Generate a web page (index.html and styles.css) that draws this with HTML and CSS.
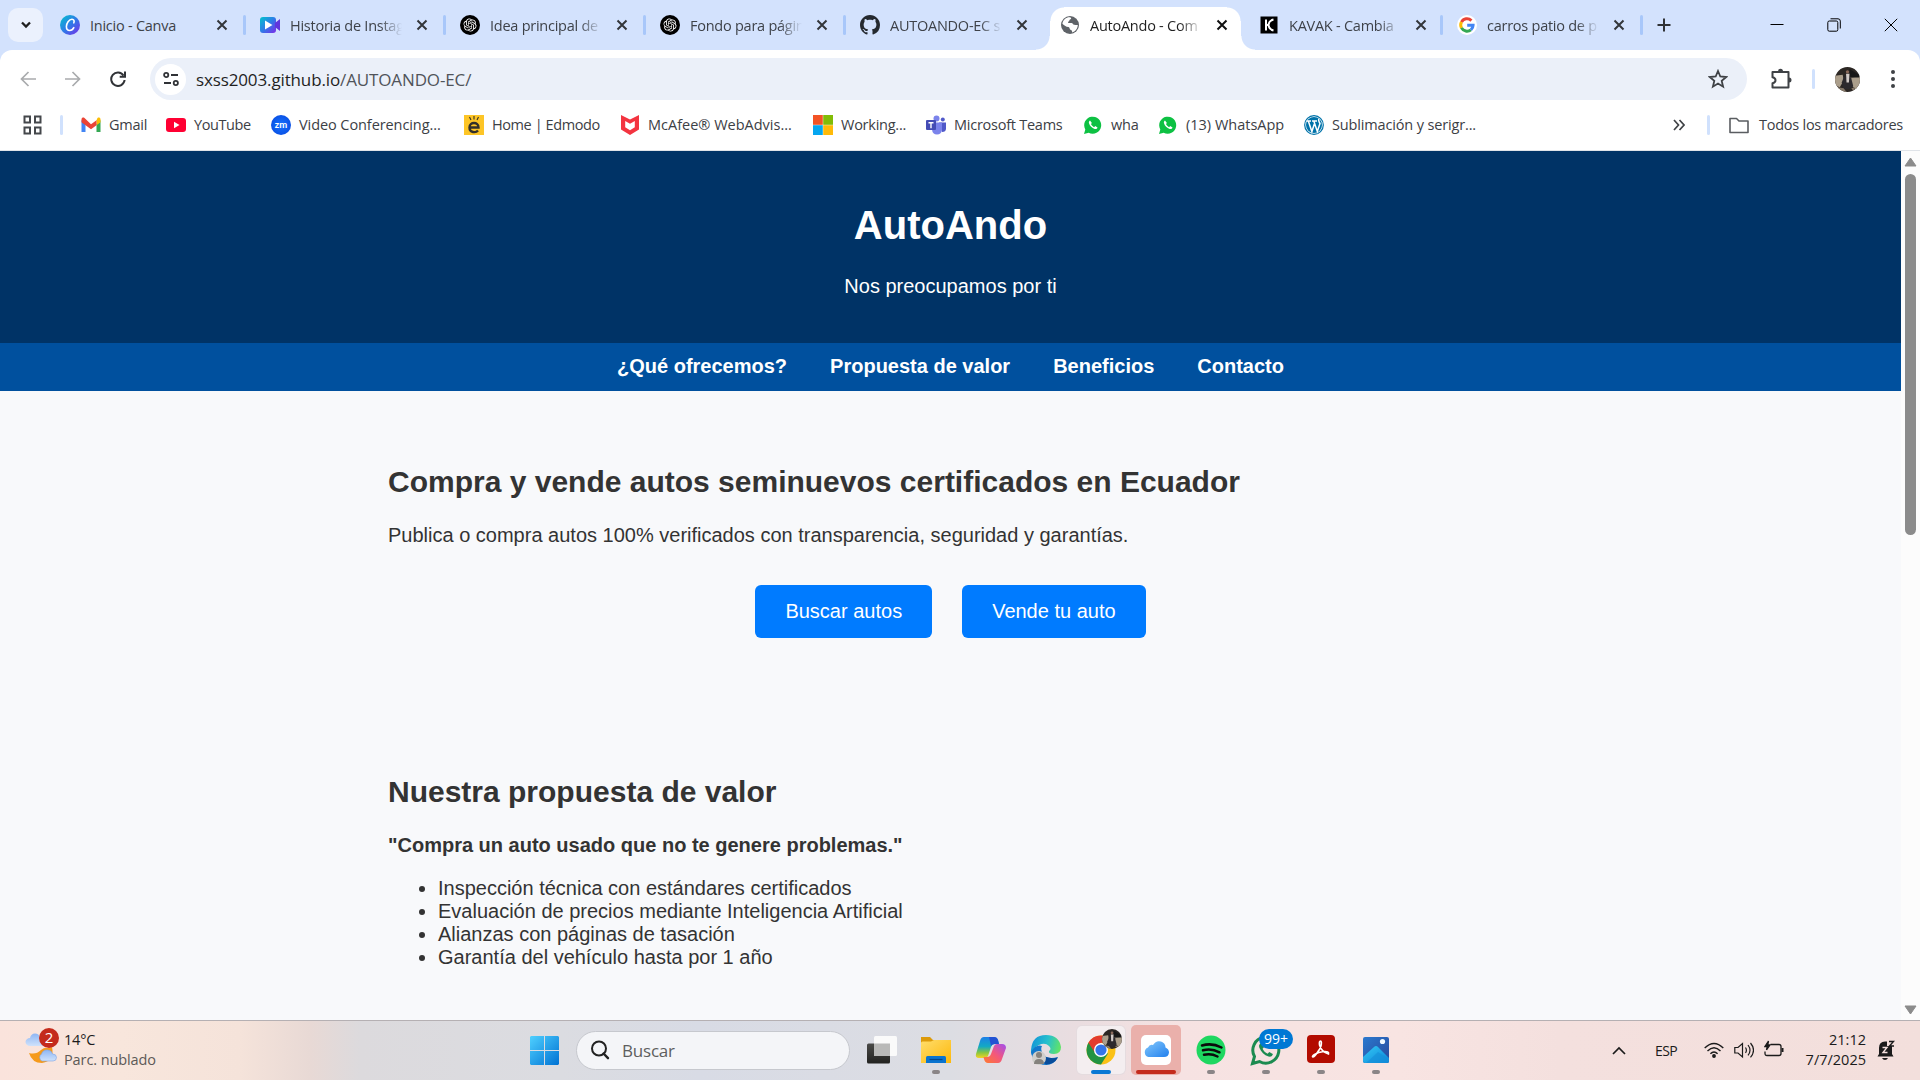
FILE: index.html
```html
<!DOCTYPE html>
<html lang="es">
<head>
<meta charset="utf-8">
<title>AutoAndo - Compra y vende autos</title>
<link rel="stylesheet" href="styles.css">
</head>
<body>
<svg width="0" height="0" class="defs" aria-hidden="true">
  <defs>
    <linearGradient id="canva" x1="0" y1="0" x2="1" y2="1"><stop offset="0" stop-color="#00c4cc"/><stop offset=".5" stop-color="#2f7be8"/><stop offset="1" stop-color="#7d2ae8"/></linearGradient>
    <linearGradient id="win" x1="0" y1="0" x2="1" y2="1"><stop offset="0" stop-color="#4fd0ff"/><stop offset="1" stop-color="#0072d3"/></linearGradient>
    <linearGradient id="folder" x1="0" y1="0" x2="1" y2="1"><stop offset="0" stop-color="#ffdd6b"/><stop offset="1" stop-color="#fdb80b"/></linearGradient>
    <linearGradient id="cop1" x1="0" y1="0" x2="0" y2="1"><stop offset="0" stop-color="#1d7fe8"/><stop offset=".45" stop-color="#12a9c4"/><stop offset=".75" stop-color="#8ac73f"/><stop offset="1" stop-color="#f5d322"/></linearGradient>
    <linearGradient id="cop2" x1="0" y1="1" x2="1" y2="0"><stop offset="0" stop-color="#ff7b2e"/><stop offset=".5" stop-color="#f3577c"/><stop offset="1" stop-color="#a04ff0"/></linearGradient>
    <linearGradient id="edge" x1="0" y1=".2" x2="1" y2=".4"><stop offset="0" stop-color="#1193d8"/><stop offset=".55" stop-color="#27c0cd"/><stop offset="1" stop-color="#5fe26a"/></linearGradient>
    <linearGradient id="cloud" x1="0" y1="0" x2="1" y2="1"><stop offset="0" stop-color="#84c8fb"/><stop offset="1" stop-color="#2180ee"/></linearGradient>
    <linearGradient id="wcloud" x1="0" y1="0" x2="0" y2="1"><stop offset="0" stop-color="#8eb6f4"/><stop offset="1" stop-color="#cfe2fb"/></linearGradient>
    <linearGradient id="photo" x1="0" y1="0" x2="1" y2="1"><stop offset="0" stop-color="#2a79cf"/><stop offset="1" stop-color="#28489a"/></linearGradient>
    <linearGradient id="mount" x1="0" y1="0" x2="1" y2="1"><stop offset="0" stop-color="#35c9f5"/><stop offset="1" stop-color="#0a84d8"/></linearGradient>
    <linearGradient id="tv" x1="0" y1="0" x2="0" y2="1"><stop offset="0" stop-color="#4a4a48"/><stop offset="1" stop-color="#222220"/></linearGradient>
    <radialGradient id="zoomb"><stop offset="0" stop-color="#1473ff"/><stop offset="1" stop-color="#0b52e6"/></radialGradient>
    <symbol id="x" viewBox="0 0 12 12"><path d="M1.500 1.500l9 9M10.500 1.500l-9 9" stroke="currentColor" stroke-width="2" fill="none"/></symbol>
    <symbol id="gpt" viewBox="0 0 20 20"><circle cx="10" cy="10" r="10" fill="#000"/><g transform="translate(3.400 3.400) scale(.55)" fill="#fff"><path d="M22.282 9.821a5.985 5.985 0 0 0-.516-4.910 6.046 6.046 0 0 0-6.510-2.900A6.065 6.065 0 0 0 4.981 4.182a5.985 5.985 0 0 0-3.998 2.900 6.046 6.046 0 0 0 .743 7.097 5.980 5.980 0 0 0 .510 4.911 6.051 6.051 0 0 0 6.515 2.900A5.985 5.985 0 0 0 13.260 24a6.056 6.056 0 0 0 5.772-4.206 5.990 5.990 0 0 0 3.997-2.900 6.056 6.056 0 0 0-.747-7.073zM13.260 22.430a4.476 4.476 0 0 1-2.876-1.040l.141-.081 4.779-2.758a.795.795 0 0 0 .392-.681v-6.737l2.020 1.168a.071.071 0 0 1 .038.052v5.583a4.504 4.504 0 0 1-4.494 4.494zM3.600 18.304a4.470 4.470 0 0 1-.535-3.014l.142.085 4.783 2.759a.771.771 0 0 0 .780 0l5.843-3.369v2.332a.080.080 0 0 1-.033.062L9.740 19.950a4.500 4.500 0 0 1-6.140-1.646zM2.340 7.896a4.485 4.485 0 0 1 2.366-1.973V11.600a.766.766 0 0 0 .388.676l5.815 3.355-2.020 1.168a.076.076 0 0 1-.071 0l-4.830-2.786A4.504 4.504 0 0 1 2.340 7.872zm16.597 3.855l-5.833-3.387L15.119 7.200a.076.076 0 0 1 .071 0l4.830 2.791a4.494 4.494 0 0 1-.676 8.105v-5.678a.790.790 0 0 0-.407-.667zm2.010-3.023l-.141-.085-4.774-2.782a.776.776 0 0 0-.785 0L9.409 9.230V6.897a.066.066 0 0 1 .028-.061l4.830-2.787a4.500 4.500 0 0 1 6.680 4.660zm-12.640 4.135l-2.020-1.164a.080.080 0 0 1-.038-.057V6.075a4.500 4.500 0 0 1 7.375-3.453l-.142.080L8.704 5.460a.795.795 0 0 0-.393.681zm1.097-2.365l2.602-1.500 2.607 1.500v2.999l-2.597 1.500-2.607-1.500z"/></g></symbol>
    <symbol id="wa" viewBox="0 0 20 20"><path d="M1 19l1.300-4.600A8.500 8.500 0 1 1 5.700 17.700z" fill="#0dc143"/><path d="M7 5.500c-.9.500-1.400 1.600-1 2.800.8 2.700 3 4.900 5.700 5.600 1.300.3 2.500-.3 2.800-1.500l-2.300-1.300-1.100 1.100c-1.400-.6-2.500-1.700-3.100-3.100l.9-1z" fill="#fff"/></symbol>
    <clipPath id="round"><circle cx="13" cy="13" r="13"/></clipPath>
    <symbol id="avatar" viewBox="0 0 26 26"><g clip-path="url(#round)"><path d="M0 0h26v26H0z" fill="#2c2724"/><path d="M0 9l8-1 1 6-4 7-5-2zM16 11l10-1v8l-4 6-5-5z" fill="#ab9e8b"/><path d="M15 2l10 6v3l-9 0z" fill="#171717"/><path d="M9 11l4-3 4 4 2 8-4 3H9l-2-7z" fill="#2c292d"/><path d="M11.500 7h3.500l-.5 9h-2.500z" fill="#d2cbc8"/><circle cx="13" cy="5" r="1.700" fill="#8b6a5b"/><path d="M3 21l6 1 3 4H5zM17 22l4-1-2 4z" fill="#857869"/></g></symbol>
  </defs>
</svg>

<div class="browser">
  <div class="tabstrip">
    <div class="tabsearch"><svg width="14" height="14" viewBox="0 0 14 14"><path d="M3 4.500l4 4 4-4" fill="none" stroke="#1f1f1f" stroke-width="2.300"/></svg></div>
    <div class="tabs">
      <div class="tab"><svg class="fav" viewBox="0 0 20 20"><circle cx="10" cy="10" r="10" fill="url(#canva)"/><path d="M13.800 7.800c.8-1.600.1-3.500-1.800-3.500-3 0-5.600 3.900-5.600 7.200 0 2.500 1.300 4 3.300 4 1.900 0 3.300-1.200 4.100-2.800" fill="none" stroke="#fff" stroke-width="1.600" stroke-linecap="round"/></svg><span class="title">Inicio - Canva</span><svg class="close"><use href="#x"/></svg></div>
      <div class="tab"><svg class="fav" viewBox="0 0 20 20"><rect y="2" width="16" height="16" rx="3" fill="url(#canva)"/><path d="M15 8l5-4v12l-5-4z" fill="#6135dc"/><path d="M5 5.500l7.500 4.500L5 14.500z" fill="#fff"/></svg><span class="title fade">Historia de Instag</span><svg class="close"><use href="#x"/></svg></div>
      <div class="tab"><svg class="fav"><use href="#gpt"/></svg><span class="title fade">Idea principal de</span><svg class="close"><use href="#x"/></svg></div>
      <div class="tab"><svg class="fav"><use href="#gpt"/></svg><span class="title fade">Fondo para págin</span><svg class="close"><use href="#x"/></svg></div>
      <div class="tab nosep"><svg class="fav" viewBox="0 0 16 16"><path fill="#24292f" d="M8 0C3.580 0 0 3.580 0 8c0 3.540 2.290 6.530 5.470 7.590.4.070.55-.17.55-.38 0-.19-.01-.82-.01-1.490-2.010.37-2.530-.49-2.690-.94-.09-.23-.48-.94-.82-1.130-.28-.15-.68-.52-.01-.53.63-.01 1.080.58 1.230.82.720 1.210 1.870.87 2.330.66.070-.52.280-.87.510-1.070-1.780-.2-3.640-.89-3.640-3.950 0-.87.310-1.590.82-2.150-.08-.2-.36-1.020.08-2.120 0 0 .67-.21 2.200.82.640-.18 1.320-.27 2-.27s1.360.09 2 .27c1.530-1.040 2.200-.82 2.200-.82.440 1.100.16 1.920.08 2.120.51.560.82 1.270.82 2.150 0 3.070-1.870 3.750-3.650 3.950.29.250.54.730.54 1.480 0 1.070-.01 1.930-.01 2.200 0 .21.150.46.550.38A8.010 8.010 0 0 0 16 8c0-4.420-3.580-8-8-8z"/></svg><span class="title fade">AUTOANDO-EC s</span><svg class="close"><use href="#x"/></svg></div>
      <div class="tab active"><svg class="fav" viewBox="0 0 20 20"><circle cx="10" cy="10" r="9" fill="#5f6368"/><path d="M10 2.300c2 1 1 2 0 2.200-1 .5-.2 1.400-1.400 1.900-1 .5-.7 1.600.5 1.600h2.500c1.400 0 1.200 1.800 2.600 1.800 1.300 0 2 .5 3.600.2-.1 3.600-2.500 6.600-5.800 7.400.5-1.500-.3-2.200-1.300-2.400-1.300-.3-.8-2.600-2.200-2.900C6 11.700 3.600 10 2.400 8.700 3 4.800 6.400 2 10 2.300z" fill="#fff"/></svg><span class="title fade">AutoAndo - Com</span><svg class="close"><use href="#x"/></svg></div>
      <div class="tab"><svg class="fav" viewBox="0 0 20 20"><path d="M1.500 1.500h17v17h-17z"/><path d="M7 4.500v11M7.500 10h2M14.500 4.500q-4.500 1-5 5.500.5 4.500 5 5.500" fill="none" stroke="#fff" stroke-width="2"/></svg><span class="title fade">KAVAK - Cambia</span><svg class="close"><use href="#x"/></svg></div>
      <div class="tab"><svg class="fav" viewBox="0 0 20 20"><circle cx="10" cy="10" r="10" fill="#fff"/><g fill="none" stroke-width="3"><path d="M4.500 7.100A6.200 6.200 0 0 1 14.400 5.600" stroke="#ea4335"/><path d="M4.500 7a6.200 6.200 0 0 0 0 6" stroke="#fbbc05"/><path d="M4.500 12.900a6.200 6.200 0 0 0 9.400 1.900" stroke="#34a853"/><path d="M13.900 14.800q2.200-1.900 2.200-4.600H10.200" stroke="#4285f4"/></g></svg><span class="title fade">carros patio de p</span><svg class="close"><use href="#x"/></svg></div>
    </div>
    <svg class="plus" width="14" height="14" viewBox="0 0 14 14"><path d="M7 .5v13M.5 7h13" stroke="#303236" stroke-width="2"/></svg>
    <div class="winbtns">
      <svg width="14" height="14" viewBox="0 0 14 14"><path d="M.5 6.500h13" stroke="#000"/></svg>
      <svg width="14" height="14" viewBox="0 0 14 14" fill="none" stroke="#000"><rect x=".8" y="3" width="10" height="10.200" rx="1.500"/><path d="M3.500.8H11q2.300 0 2.300 2.300v7.400"/></svg>
      <svg width="14" height="14" viewBox="0 0 14 14"><path d="M.8.8l12.400 12.400M13.200.8L.8 13.200" stroke="#000"/></svg>
    </div>
  </div>

  <div class="chrome">
    <div class="toolbar">
      <div class="nav-icons">
        <svg width="16" height="16" viewBox="0 0 16 16"><path d="M16 8H1.500M8.500 1L1.500 8l7 7" fill="none" stroke="#a9abad" stroke-width="1.700"/></svg>
        <svg width="16" height="16" viewBox="0 0 16 16"><path d="M0 8h14.500M7.500 1l7 7-7 7" fill="none" stroke="#a9abad" stroke-width="1.700"/></svg>
        <svg width="16" height="16" viewBox="0 0 16 16"><path d="M13.500 4.500A6.700 6.700 0 1 0 14.600 9M15 .5v5.300H9.700" fill="none" stroke="#303236" stroke-width="2"/></svg>
      </div>
      <div class="omnibox">
        <span class="site"><svg width="16" height="16" viewBox="0 0 16 16" fill="none" stroke="#303236" stroke-width="1.800"><circle cx="3.200" cy="4" r="2.100"/><path d="M8 4h7M1 12h7"/><circle cx="12.800" cy="12" r="2.100"/></svg></span>
        <span class="url">sxss2003.github.io<span class="path">/AUTOANDO-EC/</span></span>
        <svg class="star" width="20" height="20" viewBox="0 0 20 20"><path d="M10 2l2.300 5.500 5.900.5-4.500 3.900 1.400 5.800-5.100-3.100-5.100 3.100 1.400-5.800L1.800 8l5.900-.5z" fill="none" stroke="#3f4246" stroke-width="1.800"/></svg>
      </div>
      <div class="actions">
        <svg width="22" height="22" viewBox="0 0 22 22"><path d="M2.500 4h16v15.500h-16v-4.200c4-.8 4-5.200 0-6z" fill="none" stroke="#3f4246" stroke-width="2" stroke-linejoin="round"/><path d="M8 3.500a2.500 2.700 0 0 1 5 0zM19 9.500a2.500 2.500 0 0 1 0 5z" fill="#3f4246"/></svg>
        <i class="sep"></i>
        <svg width="25" height="25"><use href="#avatar"/></svg>
        <svg width="6" height="20" viewBox="0 0 6 20" fill="#3f4246"><circle cx="3" cy="3" r="2"/><circle cx="3" cy="10" r="2"/><circle cx="3" cy="17" r="2"/></svg>
      </div>
    </div>
    <div class="bookmarks">
      <svg class="apps" width="19" height="20" viewBox="0 0 19 20" fill="none" stroke="#44474b" stroke-width="2"><path d="M1.500 1.500h5.500V7.500H1.500zM12 1.500h5.500V7.500H12zM1.500 12.500h5.500v6H1.500zM12 12.500h5.500v6H12z"/></svg>
      <i class="sep"></i>
      <div class="items">
        <span class="bm w-gmail"><svg viewBox="0 0 20 20"><path d="M.5 5v12h4V9z" fill="#4285f4"/><path d="M19.500 5v12h-4V9z" fill="#34a853"/><path d="M15.500 5.200v5l4-3V4.500c0-2-2-2.500-3-1.500z" fill="#fbbc04"/><path d="M.5 4.500v2.700L10 14.300l5.500-4.100v-5L10 9.300 3.500 3C2.500 2 .5 2.500.5 4.500z" fill="#ea4335"/></svg><span>Gmail</span></span>
        <span class="bm w-yt"><svg viewBox="0 0 20 20"><rect y="3" width="20" height="14" rx="3" fill="#ff0033"/><path d="M8 6.800l5.500 3.200L8 13.200z" fill="#fff"/></svg><span>YouTube</span></span>
        <span class="bm w-zoom"><svg viewBox="0 0 20 20"><circle cx="10" cy="10" r="10" fill="url(#zoomb)"/><text x="10" y="13" text-anchor="middle" class="zm">zm</text></svg><span>Video Conferencing...</span></span>
        <span class="bm w-edm"><svg viewBox="0 0 20 20"><path d="M0 0h20v20H0z" fill="#fdc526"/><path d="M5.500 12.500h9c0-6-9-6-9 0 0 5.500 6.500 5.500 8.500 3" fill="none" stroke="#33302a" stroke-width="2.400"/><path d="M5.500 2l1.500 3M10 1v3.500M14.500 2L13 5" stroke="#33302a" stroke-width="1.100"/></svg><span>Home | Edmodo</span></span>
        <span class="bm w-mc"><svg viewBox="0 0 20 20"><path d="M1 0l9 4.500L19 0v14.500L10 20l-9-5.500zM5.200 6v6.200l4.800 3 4.800-3V6L10 8.700z" fill="#f33440" fill-rule="evenodd"/></svg><span>McAfee® WebAdvis...</span></span>
        <span class="bm w-ms"><svg viewBox="0 0 20 20"><path d="M0 0h9.800v9.800H0z" fill="#f35325"/><path d="M10.200 0H20v9.800h-9.800z" fill="#81bc06"/><path d="M0 10.200h9.800V20H0z" fill="#05a6f0"/><path d="M10.200 10.200H20V20h-9.800z" fill="#ffba08"/></svg><span>Working...</span></span>
        <span class="bm w-teams"><svg viewBox="0 0 20 20"><circle cx="16.800" cy="4.600" r="2" fill="#5059c9"/><path d="M13 7.500h7v6q0 3.500-4 3.500z" fill="#5059c9"/><circle cx="10.500" cy="3.500" r="3" fill="#7b83eb"/><path d="M6 7.500h10v7q-.5 5-5 5t-5-5z" fill="#7b83eb"/><rect y="5" width="10" height="10" rx="1" fill="#444cb5"/><path d="M2.500 7.800h5M5 7.800v5.400" stroke="#fff" stroke-width="1.400"/></svg><span>Microsoft Teams</span></span>
        <span class="bm w-wha"><svg viewBox="0 0 20 20"><use href="#wa"/></svg><span>wha</span></span>
        <span class="bm w-wa2"><svg viewBox="0 0 20 20"><use href="#wa"/></svg><span>(13) WhatsApp</span></span>
        <span class="bm w-wp"><svg viewBox="0 0 20 20"><circle cx="10" cy="10" r="9.300" fill="#fff" stroke="#0073aa" stroke-width="1.200"/><circle cx="10" cy="10" r="8" fill="#0073aa"/><path d="M2.500 6h4.500M8 6h5M4.300 6l3.600 10.500L10.300 9M9.800 6l3.500 10.500L16 8.500Q14 5.500 15 4" fill="none" stroke="#fff" stroke-width="1.500"/></svg><span>Sublimación y serigr...</span></span>
      </div>
      <svg class="more" width="12" height="12" viewBox="0 0 12 12"><path d="M1 1l4.500 5L1 11M6.500 1L11 6l-4.500 5" fill="none" stroke="#3f4246" stroke-width="1.700"/></svg>
      <i class="sep"></i>
      <span class="bm all"><svg viewBox="0 0 20 20"><path d="M1 3.500h6.500L10 6h9v11.500H1z" fill="none" stroke="#5a5d61" stroke-width="1.600" stroke-linejoin="round"/></svg><span>Todos los marcadores</span></span>
    </div>
  </div>

  <div class="viewport">
    <div class="page">
      <header class="hero">
        <h1>AutoAndo</h1>
        <p>Nos preocupamos por ti</p>
      </header>
      <nav class="menu"><a>¿Qué ofrecemos?</a><a>Propuesta de valor</a><a>Beneficios</a><a>Contacto</a></nav>
      <section class="section">
        <h2>Compra y vende autos seminuevos certificados en Ecuador</h2>
        <p>Publica o compra autos 100% verificados con transparencia, seguridad y garantías.</p>
        <div class="buttons"><a class="btn">Buscar autos</a><a class="btn">Vende tu auto</a></div>
      </section>
      <section class="section">
        <h2>Nuestra propuesta de valor</h2>
        <p><strong>"Compra un auto usado que no te genere problemas."</strong></p>
        <ul>
          <li>Inspección técnica con estándares certificados</li>
          <li>Evaluación de precios mediante Inteligencia Artificial</li>
          <li>Alianzas con páginas de tasación</li>
          <li>Garantía del vehículo hasta por 1 año</li>
        </ul>
      </section>
    </div>
    <div class="scrollbar">
      <svg width="13" height="10" viewBox="0 0 13 10"><path d="M6.500 1l5.500 8H1z" fill="#8b8b8b" stroke="#8b8b8b" stroke-linejoin="round"/></svg>
      <div class="thumb"></div>
      <svg width="13" height="10" viewBox="0 0 13 10"><path d="M6.500 9L1 1h11z" fill="#8b8b8b" stroke="#8b8b8b" stroke-linejoin="round"/></svg>
    </div>
  </div>
</div>

<div class="taskbar">
  <div class="weather">
    <svg width="34" height="38" viewBox="0 0 34 38"><path d="M4 25q7 2 12-3 4-3 6-2l5-1q3 14-10 16-10 0-13-10z" fill="#f59a1c"/><path d="M5 18a4.500 4 0 0 1 0-8q1-4.500 5-4.500t5 4h3V18z" fill="url(#wcloud)"/><path d="M17 33a4 4 0 0 1-.5-7q1.500-4.500 6-4 4 0 5 4 4 0 4 3.500T28 33z" fill="url(#wcloud)" stroke="#7ea5e6" stroke-width=".6"/><circle cx="24" cy="10" r="10" fill="#c42b1c"/><text x="24" y="15.300" text-anchor="middle" class="wnum">2</text></svg>
    <div class="wtext"><span>14°C</span><span class="cond">Parc. nublado</span></div>
  </div>
  <div class="apps-bar">
    <svg class="start" width="29" height="29" viewBox="0 0 29 29" fill="url(#win)"><path d="M1 0h13v14H0V1zM15 0h13l1 1v13H15zM0 15h14v14H1l-1-1zM15 15h14v13l-1 1H15z"/></svg>
    <div class="search"><svg width="20" height="20" viewBox="0 0 20 20"><circle cx="9" cy="8.500" r="7" fill="none" stroke="#222" stroke-width="2"/><path d="M13.500 13.500l4.500 4.700" stroke="#222" stroke-width="2.400" stroke-linecap="round"/></svg><span>Buscar</span></div>
    <div class="dock">
      <div class="app"><svg width="32" height="32" viewBox="0 0 32 32"><rect x="2" y="9.500" width="23" height="20" rx="1.500" fill="url(#tv)"/><rect x="9" y="2" width="23" height="20" rx="1.500" fill="#fafafa"/><path d="M9 9.500h16V22H9z" fill="#b9b9b8"/></svg></div>
      <div class="app"><svg width="32" height="32" viewBox="0 0 32 32"><path d="M1 3h9l3 3h18v4H1z" fill="#dc9a0a"/><path d="M1 9q0-1.500 1.500-1.500H11L14 6h17v23H1z" fill="url(#folder)"/><path d="M6 29v-5.500q0-1.500 1.500-1.500h17q1.500 0 1.500 1.500V29z" fill="#0a74cf"/><path d="M9.500 25.500h13" stroke="#04478c" stroke-width="1.200"/></svg><i class="run"></i></div>
      <div class="app"><svg width="32" height="32" viewBox="0 0 32 32"><path d="M9 3h10q3 0 4 3l1 4h-4q-3 0-4 3l-3 9q-1 2-3 2H4q-4 0-3-4L5 7q1-4 4-4z" fill="url(#cop1)"/><path d="M14 3h5q3 0 4 3l1 4h-4q-3 0-4 2z" fill="#2252d3"/><path d="M23 29H13q-3 0-4-4l-.5-2H12q3 0 4-3l3-8q1-2 3-2h5q4 0 4 4l-4 11q-1 4-4 4z" fill="url(#cop2)"/></svg></div>
      <div class="app"><svg width="32" height="32" viewBox="0 0 32 32"><path d="M1 16Q2 1 16 1q13 0 15 12 0 7-7 7-6 0-5-3 3-2 0-5-4-4-10-1-6 3-8 10z" fill="url(#edge)"/><path d="M12 12q-2 3 1 8 4 6 15 3-4 8-12 8Q3 31 1 18q5-8 11-6z" fill="#1278cc"/><path d="M16 23q6 2 12 .5-4 7-12 7-4-3-3-7z" fill="#084c9b"/><circle cx="9" cy="24" r="7" fill="#cfcecb"/><circle cx="9" cy="21" r="3" fill="#85827e"/><path d="M4 30q0-5 5-5t5 5z" fill="#85827e"/></svg></div>
      <div class="app on"><svg width="32" height="32" viewBox="0 0 32 32"><circle cx="16" cy="16" r="14.500" fill="#fbc116"/><path d="M16 16L3.400 8.800A14.500 14.500 0 0 0 16 30.500l7-11z" fill="#229342"/><path d="M3.400 8.800A14.500 14.500 0 0 1 28.600 8.800H16l-6 10z" fill="#e33b2e"/><circle cx="16" cy="16" r="7" fill="#fff"/><circle cx="16" cy="16" r="5.600" fill="#3475e8"/></svg><svg class="mini" width="20" height="20"><use href="#avatar"/></svg><i class="run blue"></i></div>
      <div class="app alert"><svg width="32" height="32" viewBox="0 0 32 32"><rect x="1" y="1" width="30" height="30" rx="5" fill="#fff"/><path d="M8.500 23a5 5 0 0 1-.5-9.500Q9.500 10 13 11q3-5 8-3.500 4.500 1.500 4.500 6Q29 15 29 18.500q-.5 4.500-5 4.500z" fill="url(#cloud)"/></svg><i class="run red"></i></div>
      <div class="app"><svg width="32" height="32" viewBox="0 0 32 32"><circle cx="16" cy="16" r="14.500" fill="#1ed760"/><path d="M7 11.500q10-3 19.500 2M8 16.300q8.500-2.300 16.500 2M9 20.800q7-1.800 13.500 1.700" fill="none" stroke="#0b0b0b" stroke-width="2.500" stroke-linecap="round"/></svg><i class="run"></i></div>
      <div class="app"><svg width="32" height="32" viewBox="0 0 32 32"><path d="M2.500 29.500l2-7A13 13 0 1 1 9.500 27.500z" fill="none" stroke="#1c8b50" stroke-width="3"/><path d="M11 9c-2 1.200-2.300 3-1.500 5 1.600 4 4.700 7.200 9 8.600 2 .6 4-.5 4.400-2.600l-3.600-2-1.700 1.700c-2.300-1-4-2.700-5-5l1.500-1.700z" fill="#1c8b50"/></svg><span class="count">99+</span><i class="run"></i></div>
      <div class="app"><svg width="32" height="32" viewBox="0 0 32 32"><rect x="2" y="1" width="28" height="28" rx="4" fill="#b30b00"/><path d="M8 22q5-2 8-10 1-5-.5-5t-1 4q2 7 9 9 1-3-5-2.500-5 .5-9 3-3 2-1.500 2.500Q10 22.500 14 16" fill="none" stroke="#fff" stroke-width="1.600"/></svg><i class="run"></i></div>
      <div class="app"><svg width="32" height="32" viewBox="0 0 32 32"><rect x="3" y="3" width="26" height="26" rx="2" fill="url(#photo)"/><path d="M3 23l11-10q2-2 4 0l11 11v3q0 2-2 2H5q-2 0-2-2z" fill="url(#mount)"/><path d="M6 29l12-11 11 7v2q0 2-2 2z" fill="#168fd8" opacity=".65"/><circle cx="22.500" cy="7.500" r="2.600" fill="#eef8ff"/></svg><i class="run"></i></div>
    </div>
  </div>
  <div class="tray">
    <svg class="up" width="14" height="9" viewBox="0 0 14 9"><path d="M1 8l6-6 6 6" fill="none" stroke="#1b1b1b" stroke-width="1.700"/></svg>
    <span class="lang">ESP</span>
    <svg class="t" viewBox="0 0 20 20" fill="none" stroke="#1b1b1b" stroke-width="1.400"><path d="M.7 8q9.300-9 18.600 0M3.500 11q6.500-6.500 13 0M6.400 13.800q3.600-3.600 7.200 0"/><circle cx="10" cy="16" r="1.200" fill="#1b1b1b"/></svg>
    <svg class="t" viewBox="0 0 20 20" fill="none" stroke="#1b1b1b" stroke-width="1.200"><path d="M.8 7.500H4l4.500-4v13.500L4 13H.8zM11.500 7.500q1.800 2.700 0 5.400M14 5q4 5.200 0 10.400M16.500 3q6 7.200 0 14.400"/></svg>
    <svg class="t" viewBox="0 0 20 20" fill="none" stroke="#1b1b1b" stroke-width="1.300"><path d="M6.500 4.500H15q2 0 2 2v7q0 2-2 2H3q-2 0-2-2v-2"/><path d="M18.500 8v4" stroke-width="2"/><path d="M4.500 1L1 6.500h2.300L2.500 10 6 5H3.700z" fill="#1b1b1b"/></svg>
    <div class="clock"><span>21:12</span><span>7/7/2025</span></div>
    <svg class="bell" width="18" height="20" viewBox="0 0 18 20"><path d="M2 14V8q0-6.500 6-6.500h2V6h5v8l1.500 2.500H.5zM5 18h6q-1 2-3 2t-3-2z" fill="#1b1b1b"/><path d="M12 1.500h4.500L12.500 6H17" fill="none" stroke="#1b1b1b" stroke-width="1.400"/><path d="M5.500 7.500h4.500L6 12.500h4.500" fill="none" stroke="#f3dfdd" stroke-width="1.400"/></svg>
  </div>
</div>
</body>
</html>
```
FILE: styles.css
```css
* { box-sizing: border-box; }
body {
  margin: 0;
  width: 1920px;
  height: 1080px;
  overflow: hidden;
  display: flex;
  flex-direction: column;
  font-family: "Open Sans", "Noto Sans", sans-serif;
  font-size: 14.500px;
}
svg { display: block; flex: none; }
.defs { position: absolute; }
.browser { height: 1020px; display: flex; flex-direction: column; background: #d3e2fd; }

/* Tab strip */
.tabstrip { height: 50px; display: flex; align-items: center; flex: none; }
.tabsearch { width: 35px; height: 34px; margin: 0 3px 0 8px; border-radius: 10px; background: #ebf1fd; display: flex; align-items: center; justify-content: center; }
.tabs { display: flex; width: 1597px; height: 50px; }
.tab { flex: none; width: 200px; position: relative; display: flex; align-items: center; padding-left: 14px; color: #3e4249; letter-spacing: -.25px; }
.tab:nth-child(6) { width: 199px; }
.tab:nth-child(7) { width: 198px; }
.tab::after { content: ""; width: 3px; height: 20px; border-radius: 2px; background: #a8c7fa; margin-left: auto; }
.tab.nosep::after, .tab.active::after { visibility: hidden; }
.tab > * { z-index: 1; }
.fav { width: 20px; height: 20px; }
.title { width: 112px; margin: 0 14px 0 10px; white-space: nowrap; flex: none; }
.fade { -webkit-mask-image: linear-gradient(90deg, #000 80%, transparent); mask-image: linear-gradient(90deg, #000 80%, transparent); }
.close { width: 12px; height: 12px; color: #33363a; }
.tab.active { color: #1f1f1f; }
.tab.active .close { color: #111; }
/* White tab body with rounded top corners and flared feet */
.tab.active::before {
  content: "";
  position: absolute;
  left: -10px;
  right: -10px;
  top: 7px;
  bottom: 0;
  background:
    radial-gradient(circle at 0 0, transparent 13px, #fff 14px) left bottom / 14px 14px no-repeat,
    radial-gradient(circle at 100% 0, transparent 13px, #fff 14px) right bottom / 14px 14px no-repeat,
    radial-gradient(circle at 100% 100%, #fff 13px, transparent 14px) 14px 0 / 14px 14px no-repeat,
    radial-gradient(circle at 0 100%, #fff 13px, transparent 14px) right 14px top / 14px 14px no-repeat,
    linear-gradient(#fff, #fff) 28px 0 / calc(100% - 56px) 14px no-repeat,
    linear-gradient(#fff, #fff) 14px 14px / calc(100% - 28px) 100% no-repeat;
}
.plus { margin-left: 14px; }
.winbtns { display: flex; gap: 43px; margin-left: auto; padding-right: 22px; }

/* Toolbar */
.chrome { height: 101px; flex: none; background: #fff; border-radius: 12px 12px 0 0; border-bottom: 1px solid #dfe3e8; padding-top: 8px; }
.toolbar { height: 42px; display: flex; align-items: center; }
.nav-icons { width: 150px; padding-left: 20px; display: flex; gap: 29px; padding-bottom: 1px; }
.omnibox { width: 1597px; height: 42px; border-radius: 21px; background: #ebf0f9; display: flex; align-items: center; padding: 0 19px 0 5px; }
.site { width: 31px; height: 31px; border-radius: 50%; background: #fff; display: flex; align-items: center; justify-content: center; }
.url { margin-left: 10px; font-size: 17px; color: #1f1f1f; letter-spacing: -.13px; }
.path { color: #50545a; }
.star { margin-left: auto; }
.actions { display: flex; align-items: center; margin-left: 23px; }
.actions .sep { margin: 0 20px; }
.actions svg:last-child { margin-left: 30px; }
.sep { width: 3px; height: 20px; border-radius: 2px; background: #d0e1fd; flex: none; }

/* Bookmarks bar */
.bookmarks { height: 50px; display: flex; align-items: center; color: #3c4045; padding-left: 23px; letter-spacing: -.25px; }
.bookmarks > .sep { margin-left: 18px; }
.items { display: flex; margin-left: 18px; width: 1592px; }
.bm { display: flex; align-items: center; gap: 8px; white-space: nowrap; flex: none; }
.bm span { padding-bottom: 2px; }
.bm svg { width: 20px; height: 20px; }
.w-gmail { width: 85px; }
.w-yt { width: 105px; letter-spacing: -.4px; }
.w-zoom { width: 193px; letter-spacing: -.08px; }
.w-edm { width: 156px; letter-spacing: -.42px; }
.w-mc { width: 193px; letter-spacing: 0; }
.w-ms { width: 113px; }
.w-teams { width: 157px; }
.w-wha { width: 75px; }
.w-wa2 { width: 146px; letter-spacing: 0; }
.w-wp { letter-spacing: -.15px; }
.zm { font: 700 9.500px "Lato", sans-serif; fill: #fff; letter-spacing: 0; }
.bookmarks > .sep + .all { margin-left: 19px; gap: 10px; }
.bookmarks .more + .sep { margin-left: 22px; }

/* Web page */
.viewport { flex: 1; display: flex; min-height: 0; }
.page { width: 1901px; height: 869px; overflow: hidden; background: #f8f9fb; color: #333; font-family: Arial, "Liberation Sans", sans-serif; font-size: 20px; }
.hero { background: #003366; color: #fff; text-align: center; padding: 25px; height: 192px; }
.hero h1 { font-size: 40px; margin: 26.800px 0; line-height: 45px; }
.hero p { margin: 0; line-height: 23px; }
.menu { height: 48px; background: #00509e; color: #fff; font-weight: 700; display: flex; justify-content: center; align-items: center; gap: 43px; line-height: 23px; padding-bottom: 2px; }
.section { width: 1125px; height: 310px; margin: 0 auto; padding: 49px 0 50px; }
.section h2 { font-size: 30px; line-height: 34px; margin: 25px 0; }
.section p { margin: 20px 0; line-height: 23px; }
.buttons { display: flex; justify-content: center; gap: 30px; margin-top: 38px; }
.btn { background: #007bff; color: #fff; padding: 15px 30px; border-radius: 6px; line-height: 23px; }
.section ul { margin: 20px 0; padding-left: 50px; line-height: 23px; }
.scrollbar { width: 19px; background: #fcfcfc; display: flex; flex-direction: column; align-items: center; padding: 6px 0 5px; }
.scrollbar .thumb { width: 11px; height: 361px; border-radius: 6px; background: #8b8b8b; margin: 7px 0 auto; }

/* Taskbar */
.taskbar { height: 60px; border-top: 1px solid #b5b0b3; display: flex; align-items: center; color: #1b1b1b; letter-spacing: -.2px; background: linear-gradient(90deg, #fae3dc 0, #f8e6dc 120px, #f5e3da 240px, #e8d9d5 310px, #dcdadd 360px, #dbdce1 560px, #d8dbe5 700px, #dcdde3 950px, #eadde0 1080px, #f6e2e2 1180px, #f8e4e2 1400px, #f4e0de 1560px, #f3dfdc 1920px); }
.weather { width: 530px; padding-left: 25px; display: flex; gap: 5px; align-items: center; }
.weather svg { margin-bottom: 8px; }
.wnum { font: 15px "Open Sans", sans-serif; fill: #fff; letter-spacing: 0; }
.wtext { display: flex; flex-direction: column; line-height: 20px; padding-bottom: 2px; }
.cond { color: #5d5957; letter-spacing: -.1px; }
.apps-bar { display: flex; align-items: center; padding-bottom: 1px; }
.search { width: 274px; height: 39px; margin: 0 10px 0 17px; border-radius: 20px; background: #f4f5f8; border: 1px solid #c6c8ce; display: flex; align-items: center; padding-left: 13px; gap: 12px; font-size: 17px; color: #5e5e5e; }
.dock { display: flex; gap: 5px; margin-left: -4px; }
.app { width: 50px; height: 50px; border-radius: 5px; position: relative; display: flex; justify-content: center; align-items: center; }
.on { background: #f4eef0; box-shadow: 0 0 0 1px #e5dcdf; width: 48px; height: 48px; margin: 1px; }
.alert { background: #eab0ab; }
.run { position: absolute; bottom: 1px; left: 50%; width: 8px; height: 4px; margin-left: -4px; border-radius: 2px; background: #8a8587; }
.run.blue { width: 20px; margin-left: -10px; background: #0a78d4; bottom: 0; }
.run.red { width: 40px; margin-left: -20px; background: #c42b1c; }
.mini { position: absolute; right: 3px; top: 3px; }
.count { position: absolute; left: 18px; top: 4px; width: 34px; height: 20px; border-radius: 10px; background: #0078d4; color: #fff; font-size: 14px; line-height: 20px; text-align: center; letter-spacing: 0; }
.tray { margin-left: auto; display: flex; align-items: center; padding: 0 25px 1px 0; }
.lang { margin: 0 26px 0 29px; font-size: 14px; width: 23px; letter-spacing: -.6px; }
.t { width: 20px; height: 20px; margin-right: 10px; }
.clock { width: 72px; display: flex; flex-direction: column; text-align: right; line-height: 20.500px; margin-right: 11px; letter-spacing: 0; }
```
